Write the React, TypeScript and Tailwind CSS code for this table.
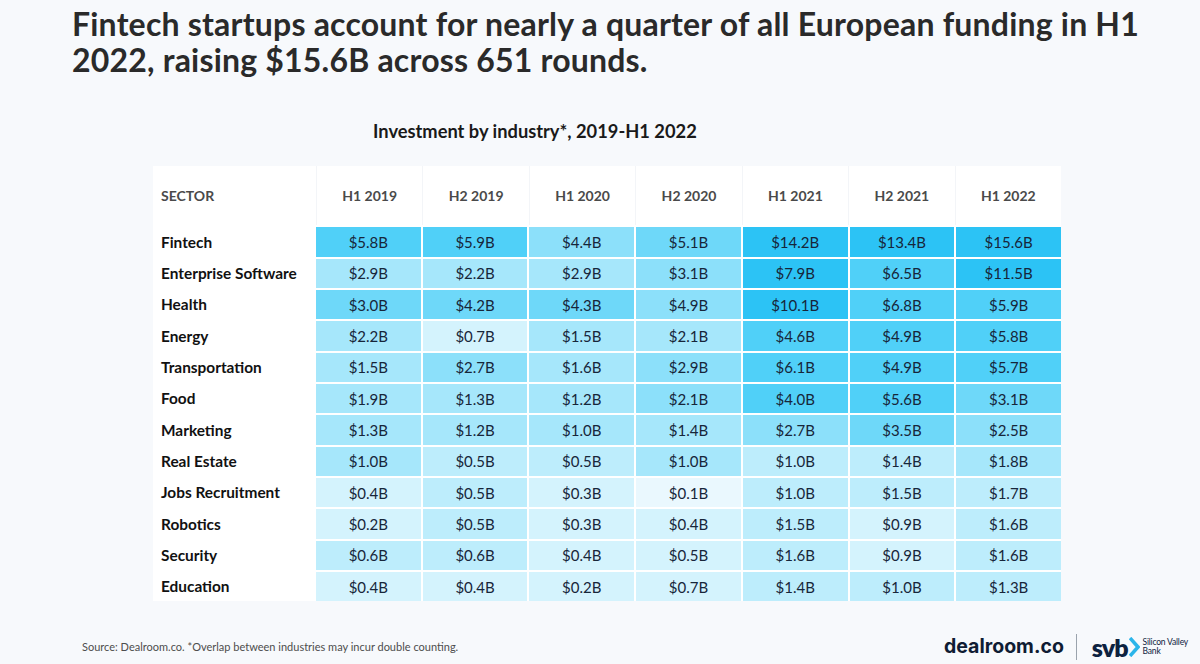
const periods = ["H1 2019", "H2 2019", "H1 2020", "H2 2020", "H1 2021", "H2 2021", "H1 2022"];

// heat levels, light -> dark
const shades = ["#eaf8fe", "#d4f3fd", "#bdedfc", "#a6e7fb", "#8ce0fa", "#6ed8f9", "#50d0f8", "#2cc3f5"];

const rows: { sector: string; values: string[]; levels: number[] }[] = [
  { sector: "Fintech", values: ["$5.8B", "$5.9B", "$4.4B", "$5.1B", "$14.2B", "$13.4B", "$15.6B"], levels: [6, 6, 4, 5, 7, 7, 7] },
  { sector: "Enterprise Software", values: ["$2.9B", "$2.2B", "$2.9B", "$3.1B", "$7.9B", "$6.5B", "$11.5B"], levels: [3, 3, 3, 4, 7, 6, 7] },
  { sector: "Health", values: ["$3.0B", "$4.2B", "$4.3B", "$4.9B", "$10.1B", "$6.8B", "$5.9B"], levels: [5, 5, 5, 4, 7, 6, 6] },
  { sector: "Energy", values: ["$2.2B", "$0.7B", "$1.5B", "$2.1B", "$4.6B", "$4.9B", "$5.8B"], levels: [3, 1, 3, 3, 6, 6, 6] },
  { sector: "Transportation", values: ["$1.5B", "$2.7B", "$1.6B", "$2.9B", "$6.1B", "$4.9B", "$5.7B"], levels: [3, 4, 3, 4, 6, 6, 6] },
  { sector: "Food", values: ["$1.9B", "$1.3B", "$1.2B", "$2.1B", "$4.0B", "$5.6B", "$3.1B"], levels: [3, 3, 3, 4, 6, 6, 5] },
  { sector: "Marketing", values: ["$1.3B", "$1.2B", "$1.0B", "$1.4B", "$2.7B", "$3.5B", "$2.5B"], levels: [3, 3, 3, 3, 4, 5, 4] },
  { sector: "Real Estate", values: ["$1.0B", "$0.5B", "$0.5B", "$1.0B", "$1.0B", "$1.4B", "$1.8B"], levels: [3, 2, 2, 3, 2, 2, 3] },
  { sector: "Jobs Recruitment", values: ["$0.4B", "$0.5B", "$0.3B", "$0.1B", "$1.0B", "$1.5B", "$1.7B"], levels: [1, 2, 1, 0, 2, 2, 2] },
  { sector: "Robotics", values: ["$0.2B", "$0.5B", "$0.3B", "$0.4B", "$1.5B", "$0.9B", "$1.6B"], levels: [1, 2, 1, 1, 2, 1, 2] },
  { sector: "Security", values: ["$0.6B", "$0.6B", "$0.4B", "$0.5B", "$1.6B", "$0.9B", "$1.6B"], levels: [2, 2, 1, 1, 2, 1, 2] },
  { sector: "Education", values: ["$0.4B", "$0.4B", "$0.2B", "$0.7B", "$1.4B", "$1.0B", "$1.3B"], levels: [1, 1, 1, 1, 2, 2, 2] },
];

const SvbLogo = () => (
  <div className="flex items-center">
    <span className="text-[25px] font-extrabold leading-none tracking-[-1px] text-[#0d2240]">svb</span>
    <svg width="11" height="20" viewBox="0 0 11 20" className="ml-[1px]">
      <path d="M1 1 L9 10 L1 19" fill="none" stroke="#2bb5ea" strokeWidth="3.5" strokeLinejoin="miter" />
    </svg>
    <div className="ml-[3px] flex flex-col text-[8.5px] leading-[9px] tracking-[-0.2px] text-[#0d2240]">
      <span>Silicon Valley</span>
      <span>Bank</span>
    </div>
  </div>
);

export default function App() {
  return (
    <div className="w-[1200px] h-[664px] bg-[#f7f9fc] font-['Lato',sans-serif] relative overflow-hidden">
      <h1 className="pl-[72px] pt-[6px] text-[32px] leading-[36px] tracking-[0.2px] font-bold text-[#2a2a2a]">
        Fintech startups account for nearly a quarter of all European funding in H1
        <br />
        2022, raising $15.6B across 651 rounds.
      </h1>

      <h2 className="mt-[40px] pl-[373px] text-[18.3px] font-bold text-[#1a1a1a]">
        Investment by industry*, 2019-H1 2022
      </h2>

      <div className="ml-[153px] mt-[21px] w-[908px]">
        <div className="grid grid-cols-[163px_repeat(7,1fr)] h-[59px] bg-white">
          <div className="flex items-center pl-[8px] text-[14px] font-bold text-[#4a4a4a]">SECTOR</div>
          {periods.map((p) => (
            <div key={p} className="flex items-center justify-center border-l border-[#f3f5f8] text-[14px] font-bold text-[#4a4a4a]">
              {p}
            </div>
          ))}
        </div>
        <div className="grid grid-cols-[161px_repeat(7,1fr)] grid-rows-[repeat(12,1fr)] gap-[2px] h-[376px] pt-[2px] bg-white">
          {rows.map((r) => (
            <div key={r.sector} className="contents">
              <div className="flex items-center pl-[8px] text-[15.4px] font-bold text-[#111]">{r.sector}</div>
              {r.values.map((v, i) => (
                <div
                  key={i}
                  className="flex items-center justify-center text-[15px] text-[#17263a]"
                  style={{ backgroundColor: shades[r.levels[i]] }}
                >
                  {v}
                </div>
              ))}
            </div>
          ))}
        </div>
      </div>

      <div className="absolute left-0 right-0 bottom-0 h-[34px] flex items-center justify-between pl-[82px] pr-[12px]">
        <span className="text-[11px] text-[#4d4d4d]">
          Source: Dealroom.co. *Overlap between industries may incur double counting.
        </span>
        <div className="flex items-center">
          <span className="font-['Inter',sans-serif] text-[19.5px] font-bold text-[#0f1c33]">dealroom.co</span>
          <div className="ml-[12px] mr-[15px] h-[26px] w-[1px] bg-[#9aa3ad]" />
          <SvbLogo />
        </div>
      </div>
    </div>
  );
}
